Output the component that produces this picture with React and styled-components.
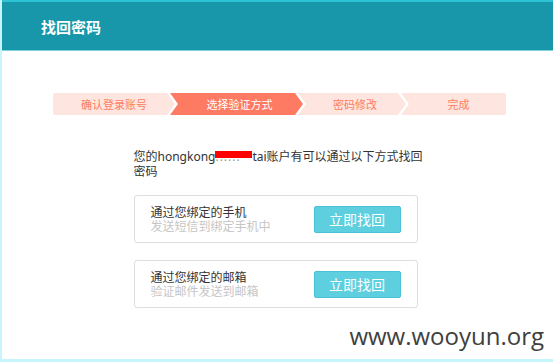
import React from "react";
import styled, { createGlobalStyle } from "styled-components";

const Global = createGlobalStyle`
  html, body { margin: 0; padding: 0; background: #c6f6fb; }
  body { font-family: "Noto Sans", "Noto Sans CJK SC", sans-serif; }
  * { box-sizing: border-box; }
`;

const Frame = styled.div`
  margin-left: 2px;
  height: 359px;
  display: flex;
  flex-direction: column;
  background: #fff;
`;

const Header = styled.header`
  height: 51px;
  border-top: 2px solid #2cc3d5;
  border-bottom: 1px solid #7ed3de;
  background: #1797a9;
  display: flex;
  align-items: center;
  padding-left: 39px;
  color: #fff;
  font-size: 15px;
  font-weight: 700;
  font-family: "Noto Sans CJK SC", sans-serif;
`;

const Main = styled.main`
  flex: 1;
  display: flex;
  flex-direction: column;
  align-items: center;
  padding-top: 42px;
`;

const Steps = styled.div`
  display: flex;
  width: 453px;
  height: 22px;
  margin-left: 4px;
`;

const Step = styled.div`
  width: ${(p) => p.$w}px;
  margin-left: ${(p) => (p.$first ? 0 : -5)}px;
  height: 22px;
  display: flex;
  align-items: center;
  justify-content: center;
  font-size: 11px;
  font-family: "Noto Sans CJK SC", sans-serif;
  color: ${(p) => (p.$active ? "#fff" : "#fd7d60")};
  background: ${(p) => (p.$active ? "#ff7a63" : "#fee5e0")};
  border-radius: ${(p) => (p.$first ? "2px 0 0 2px" : p.$last ? "0 2px 2px 0" : "0")};
  clip-path: ${(p) =>
    p.$first
      ? "polygon(0 0, calc(100% - 8px) 0, 100% 50%, calc(100% - 8px) 100%, 0 100%)"
      : p.$last
      ? "polygon(0 0, 100% 0, 100% 100%, 0 100%, 8px 50%)"
      : "polygon(0 0, calc(100% - 8px) 0, 100% 50%, calc(100% - 8px) 100%, 0 100%, 8px 50%)"};
  padding-left: ${(p) => (p.$first ? 4 : 10)}px;
  padding-right: ${(p) => (p.$last ? 0 : 4)}px;
`;

const Column = styled.div`
  width: 284px;
  margin-top: 34px;
  margin-left: -4px;
  display: flex;
  flex-direction: column;
`;

const Intro = styled.p`
  margin: 0 -8px 0 0;
  font-size: 12px;
  line-height: 15px;
  color: #333;
`;

const Masked = styled.span`
  position: relative;
  display: inline-block;
  width: 37px;
  height: 15px;
  overflow: hidden;
  vertical-align: bottom;
  color: #999;
  letter-spacing: 1px;
  white-space: nowrap;
`;

const Redact = styled.span`
  position: absolute;
  left: 0;
  top: 2px;
  width: 37px;
  height: 7px;
  background: #ff0000;
`;

const Card = styled.div`
  margin-top: ${(p) => p.$mt}px;
  height: 48px;
  border: 1px solid #dedede;
  border-radius: 3px;
  display: flex;
  align-items: center;
  justify-content: space-between;
  padding: 0 16px 0 16px;
`;

const CardText = styled.div`
  display: flex;
  flex-direction: column;
  font-family: "Noto Sans CJK SC", sans-serif;
  font-size: 12px;
  line-height: 14px;
`;

const Title = styled.span`
  color: #333;
`;

const Sub = styled.span`
  color: #c6c6c6;
`;

const Button = styled.button`
  width: 87px;
  height: 27px;
  border: 1px solid #48c3d5;
  border-radius: 2px;
  background: #5dcfdf;
  color: #fff;
  font-size: 14px;
  font-family: "Noto Sans CJK SC", sans-serif;
  padding: 0;
  cursor: pointer;
`;

const Watermark = styled.div`
  align-self: flex-end;
  margin-top: 13px;
  margin-right: 9px;
  font-family: "Open Sans", sans-serif;
  font-size: 24px;
  color: #404040;
  line-height: 30px;
`;

const steps = [
  { label: "确认登录账号", w: 122 },
  { label: "选择验证方式", w: 133, active: true },
  { label: "密码修改", w: 108 },
  { label: "完成", w: 105 },
];

export default function App() {
  return (
    <>
      <Global />
      <Frame>
        <Header>找回密码</Header>
        <Main>
          <Steps>
            {steps.map((s, i) => (
              <Step
                key={s.label}
                $w={s.w}
                $first={i === 0}
                $last={i === steps.length - 1}
                $active={s.active}
              >
                {s.label}
              </Step>
            ))}
          </Steps>
          <Column>
            <Intro>
              您的hongkong
              <Masked>
                ......
                <Redact />
              </Masked>
              tai账户有可以通过以下方式找回密码
            </Intro>
            <Card $mt={16}>
              <CardText>
                <Title>通过您绑定的手机</Title>
                <Sub>发送短信到绑定手机中</Sub>
              </CardText>
              <Button>立即找回</Button>
            </Card>
            <Card $mt={17}>
              <CardText>
                <Title>通过您绑定的邮箱</Title>
                <Sub>验证邮件发送到邮箱</Sub>
              </CardText>
              <Button>立即找回</Button>
            </Card>
          </Column>
          <Watermark>www.wooyun.org</Watermark>
        </Main>
      </Frame>
    </>
  );
}
